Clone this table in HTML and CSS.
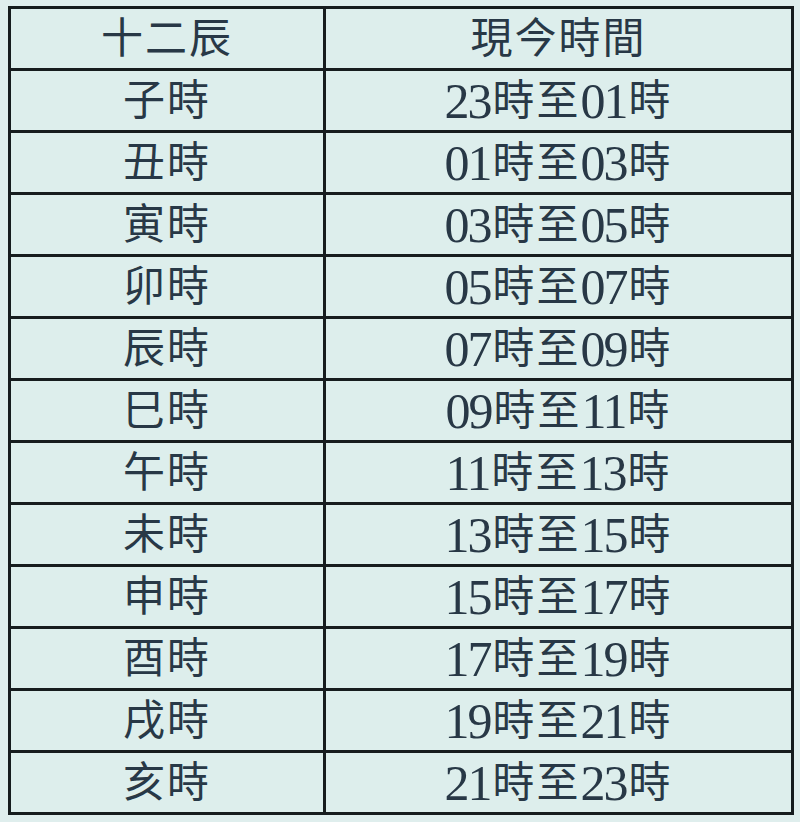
FILE: index.html
```html
<!DOCTYPE html>
<html lang="zh-Hant">
<head>
<meta charset="utf-8">
<title>十二辰</title>
<link rel="stylesheet" href="styles.css">
</head>
<body>
<div class="table">
  <div class="cell">十二辰</div><div class="cell">現今時間</div>
  <div class="cell">子時</div><div class="cell"><span class="num">23</span>時至<span class="num">01</span>時</div>
  <div class="cell">丑時</div><div class="cell"><span class="num">01</span>時至<span class="num">03</span>時</div>
  <div class="cell">寅時</div><div class="cell"><span class="num">03</span>時至<span class="num">05</span>時</div>
  <div class="cell">卯時</div><div class="cell"><span class="num">05</span>時至<span class="num">07</span>時</div>
  <div class="cell">辰時</div><div class="cell"><span class="num">07</span>時至<span class="num">09</span>時</div>
  <div class="cell">巳時</div><div class="cell"><span class="num">09</span>時至<span class="num">11</span>時</div>
  <div class="cell">午時</div><div class="cell"><span class="num">11</span>時至<span class="num">13</span>時</div>
  <div class="cell">未時</div><div class="cell"><span class="num">13</span>時至<span class="num">15</span>時</div>
  <div class="cell">申時</div><div class="cell"><span class="num">15</span>時至<span class="num">17</span>時</div>
  <div class="cell">酉時</div><div class="cell"><span class="num">17</span>時至<span class="num">19</span>時</div>
  <div class="cell">戌時</div><div class="cell"><span class="num">19</span>時至<span class="num">21</span>時</div>
  <div class="cell">亥時</div><div class="cell"><span class="num">21</span>時至<span class="num">23</span>時</div>
</div>
</body>
</html>
```
FILE: styles.css
```css
html, body {
  background: #dfeeed;
}
body {
  margin: 6px 0 0 8px;
}
.table {
  display: grid;
  grid-template-columns: 312px 465px;
  grid-auto-rows: 59px;
  gap: 3px;
  padding: 3px;
  width: max-content;
  background: #161c1e;
}
.cell {
  background: #ddeeec;
  display: flex;
  align-items: center;
  justify-content: center;
  font-family: "Liberation Serif", "Noto Sans CJK TC", serif;
  font-size: 42px;
  line-height: 1;
  color: #283846;
  letter-spacing: 2px;
}
.num {
  font-size: 50px;
  letter-spacing: -2px;
  margin-right: 2px;
}
```
